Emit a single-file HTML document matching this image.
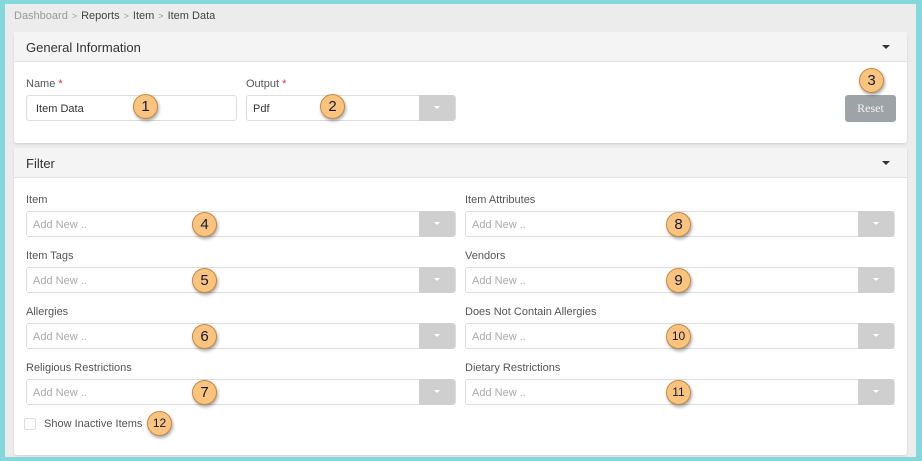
<!DOCTYPE html>
<html><head><style>
*{box-sizing:border-box;margin:0;padding:0}
body{width:922px;height:461px;background:#84d8dc;font-family:"Liberation Sans",sans-serif;position:relative;overflow:hidden}
.page{position:absolute;left:5px;top:4px;width:911px;height:453px;background:#ececec}
.abs{position:absolute}
.crumb{left:14px;top:10px;font-size:11px;color:#444}
.crumb .g{color:#999}.crumb .s{color:#999;font-size:9px;margin:0 4px}
.card{position:absolute;left:14px;width:893px;background:#fff;border-radius:3px;box-shadow:0 1px 2px rgba(0,0,0,.12)}
.hd{height:30px;background:#f4f4f4;border-bottom:1px solid #e2e2e2;padding:8px 12px;font-size:13px;color:#333;position:relative}
.hd:after{content:"";position:absolute;right:17px;top:13px;border-left:4px solid transparent;border-right:4px solid transparent;border-top:4px solid #333}
.lbl{font-size:11px;color:#555}
.lbl i{color:#d33;font-style:normal}
.inp{position:absolute;height:26px;border:1px solid #ddd;border-radius:3px;background:#fff;font-size:11px;color:#333;padding:7px 9px}
.inp.ph{color:#aaa;padding-left:6px}
.btn{position:absolute;right:0;top:-1px;width:36px;height:26px;background:#cfcfcf;border-radius:0 3px 3px 0}
.btn:after{content:"";position:absolute;left:15px;top:11px;border-left:3px solid transparent;border-right:3px solid transparent;border-top:3px solid #fff}
.b{position:absolute;width:25px;height:25px;border-radius:50%;background:#fbc47e;border:1px solid #c08a44;box-shadow:1px 2px 3px rgba(0,0,0,.35);font-size:15px;color:#111a3a;text-align:center;line-height:23px}
.b.s{font-size:12px}
.reset{position:absolute;top:95px;width:51px;height:27px;background:#9ea3a7;border-radius:3px;color:#f2f2f2;font-family:"Liberation Serif",serif;font-size:12px;text-align:center;line-height:27px}
</style></head><body>
<div class="page"></div>
<div class="abs crumb"><span class="g">Dashboard</span><span class="s">&gt;</span>Reports<span class="s">&gt;</span>Item<span class="s">&gt;</span>Item Data</div>
<div class="card" style="top:32px;height:111px"><div class="hd">General Information</div></div>
<div class="card" style="top:148px;height:307px"><div class="hd">Filter</div></div>
<div class="abs lbl" style="left:26px;top:78px">Name <i>*</i></div>
<div class="abs lbl" style="left:246px;top:78px">Output <i>*</i></div>
<div class="inp" style="left:26px;top:95px;width:211px">Item Data</div>
<div class="inp" style="left:246px;top:95px;width:210px;padding-left:6px">Pdf<div class="btn"></div></div>
<div class="reset" style="left:845px">Reset</div>

<div class="abs lbl" style="left:26px;top:194px">Item</div>
<div class="abs lbl" style="left:26px;top:250px">Item Tags</div>
<div class="abs lbl" style="left:26px;top:306px">Allergies</div>
<div class="abs lbl" style="left:26px;top:362px">Religious Restrictions</div>
<div class="abs lbl" style="left:465px;top:194px">Item Attributes</div>
<div class="abs lbl" style="left:465px;top:250px">Vendors</div>
<div class="abs lbl" style="left:465px;top:306px">Does Not Contain Allergies</div>
<div class="abs lbl" style="left:465px;top:362px">Dietary Restrictions</div>

<div class="inp ph" style="left:26px;top:211px;width:430px">Add New ..<div class="btn"></div></div>
<div class="inp ph" style="left:26px;top:267px;width:430px">Add New ..<div class="btn"></div></div>
<div class="inp ph" style="left:26px;top:323px;width:430px">Add New ..<div class="btn"></div></div>
<div class="inp ph" style="left:26px;top:379px;width:430px">Add New ..<div class="btn"></div></div>
<div class="inp ph" style="left:465px;top:211px;width:430px">Add New ..<div class="btn"></div></div>
<div class="inp ph" style="left:465px;top:267px;width:430px">Add New ..<div class="btn"></div></div>
<div class="inp ph" style="left:465px;top:323px;width:430px">Add New ..<div class="btn"></div></div>
<div class="inp ph" style="left:465px;top:379px;width:430px">Add New ..<div class="btn"></div></div>

<div class="abs" style="left:24px;top:418px;width:12px;height:12px;border:1px solid #ddd;border-radius:2px;background:#fff"></div>
<div class="abs lbl" style="left:44px;top:418px">Show Inactive Items</div>

<div class="b" style="left:133px;top:94px">1</div>
<div class="b" style="left:320px;top:94px">2</div>
<div class="b" style="left:859px;top:68px">3</div>
<div class="b" style="left:192px;top:212px">4</div>
<div class="b" style="left:192px;top:268px">5</div>
<div class="b" style="left:192px;top:324px">6</div>
<div class="b" style="left:192px;top:380px">7</div>
<div class="b" style="left:666px;top:212px">8</div>
<div class="b" style="left:666px;top:268px">9</div>
<div class="b s" style="left:666px;top:324px">10</div>
<div class="b s" style="left:666px;top:380px">11</div>
<div class="b s" style="left:147px;top:411px">12</div>
</body></html>
